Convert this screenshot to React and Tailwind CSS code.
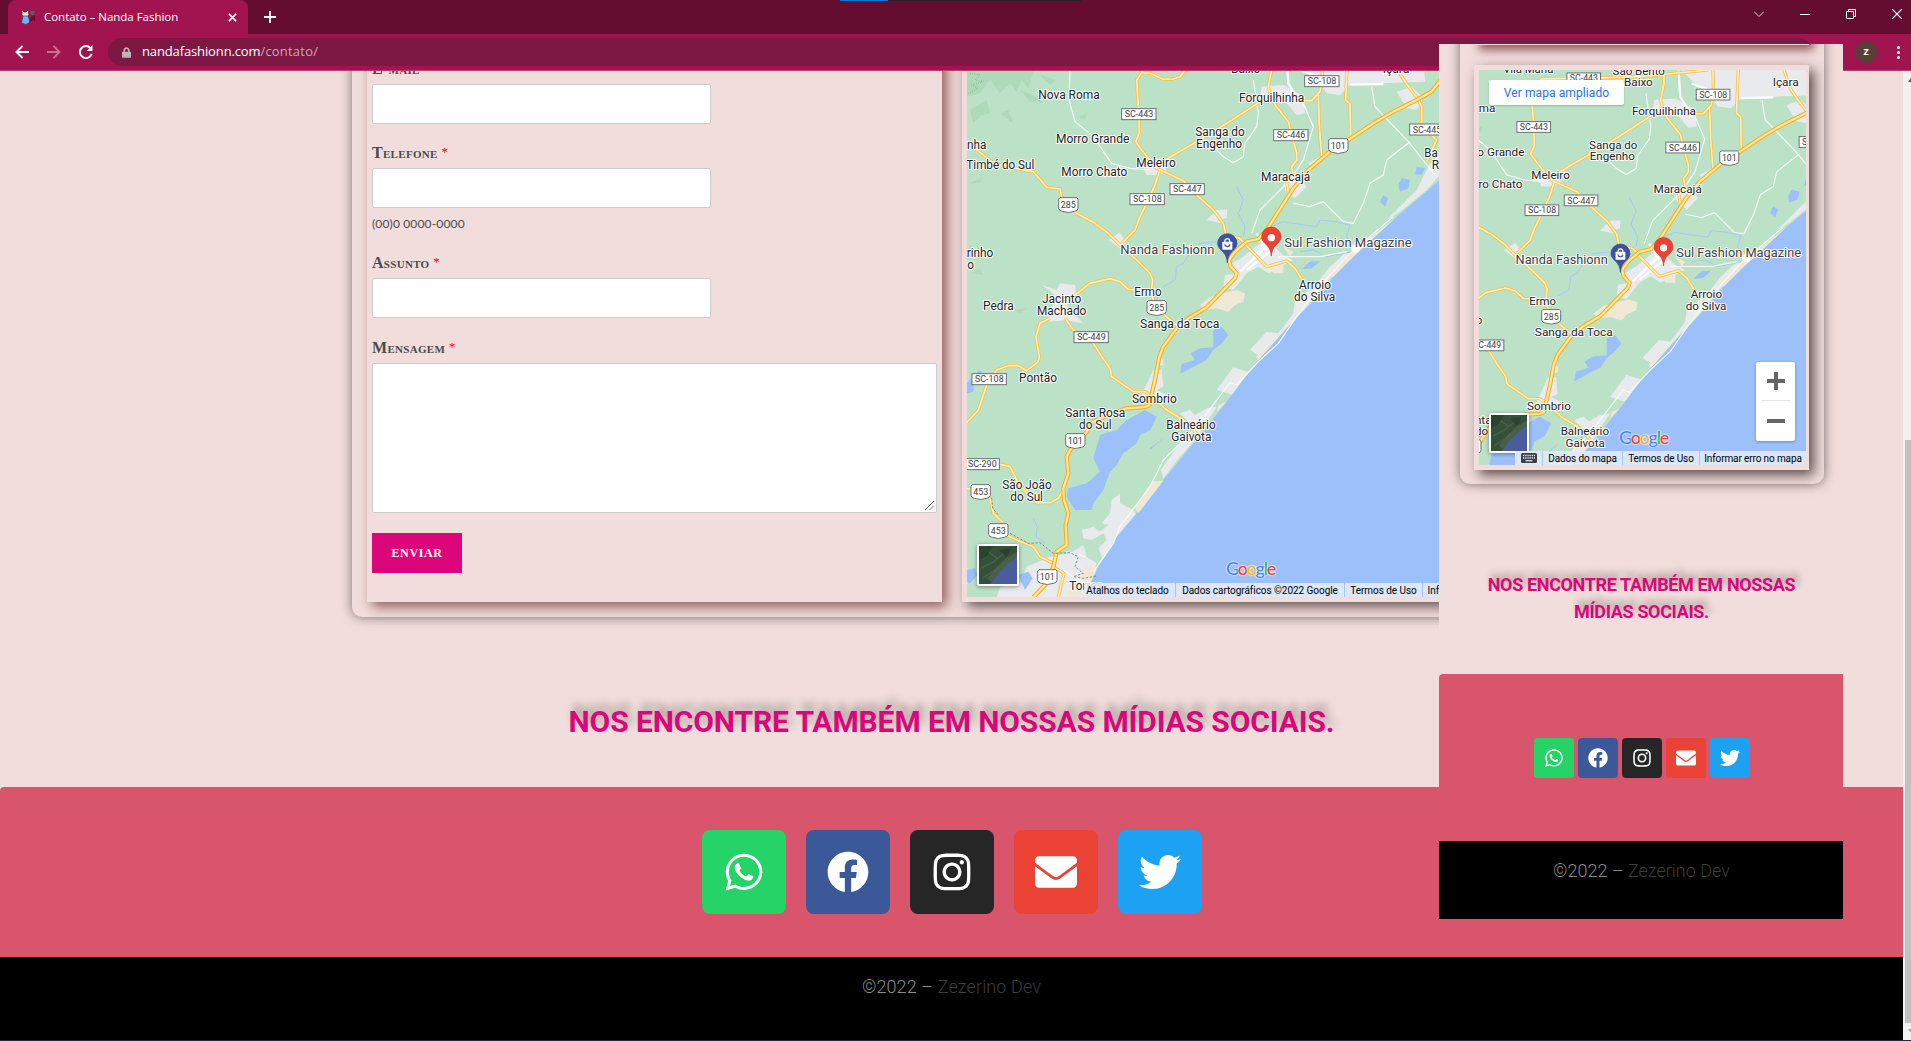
import React from "react";
import { FaWhatsapp, FaFacebook, FaInstagram, FaEnvelope, FaTwitter, FaLock } from "react-icons/fa";

const MOTORWAY =
  "M1700 -60 L1480 50 L1445 95 L1400 120 L1330 155 L1270 190 L1195 240 L1140 275 L1075 330 L1030 385 L985 455 L950 510 L925 537 L890 545 L855 575 L837 600 L842 620 L860 640 L855 655 L770 742 L715 775 L680 805 L640 860 L628 890 L615 960 L603 1010 L598 1035 L585 1041 L530 1045 L480 1062 L430 1085 L400 1130 L360 1170 L350 1190 L355 1240 L340 1285 L342 1320 L355 1360 L347 1395 L350 1455 L320 1475 L310 1520 L290 1570 L250 1612";

const ROADS = [
  "M75 265 L125 305 L165 320 L250 335 L290 382 L330 387 L335 410 L355 440 L380 460 L435 490 L475 520 L515 560 L560 600 L600 640 L608 660 L603 700 L620 745 L655 775 L685 800",
  "M705 32 L690 50 L670 57 L640 58 L600 40 L575 38 L560 60 L563 110 L567 160 L568 220 L557 245 L575 270 L620 325",
  "M575 38 L590 15 L770 12 L900 8 L1100 -12",
  "M960 105 L900 145 L830 190 L740 245 L680 280 L650 298 L620 325 L700 362 L740 405 L790 450 L820 490 L828 525 L870 535 L890 558 L950 620 L1010 603 L1035 625 L1060 665",
  "M630 330 L615 375 L590 430 L570 470 L555 510 L515 550",
  "M965 -20 L965 30 L955 80 L960 100 L975 135 L1015 185 L1025 225 L1040 280 L1040 300 L1025 320 L1030 345 L1010 365 L1015 395",
  "M1060 122 L1085 122 L1110 95 L1117 60 L1115 -20",
  "M1105 105 L1108 200 L1115 290",
  "M1193 -20 L1187 120 L1200 132 L1202 235",
  "M1330 -20 L1352 45 L1372 75 L1405 118 L1415 140 L1415 200 L1460 240 L1430 305",
  "M375 705 L420 670 L480 656 L510 665 L535 688 L570 690",
  "M300 775 L270 790 L258 830 L268 890 L265 905 L230 932 L205 917 L175 917 L140 930 L110 975 L85 1050 L51 1087",
  "M345 775 L370 810 L400 830 L430 850 L455 890 L480 925 L485 950 L550 995 L585 995 L600 1005 L650 1050 L700 1080 L740 1120",
  "M150 1213 L180 1220 L200 1260 L230 1300 L260 1328 L300 1328 L325 1315 L340 1290",
  "M51 1285 L80 1290 L120 1315 L130 1360 L158 1387",
  "M150 1415 L200 1440 L250 1460 L270 1490 L310 1510",
  "M310 1520 L342 1540 L325 1612",
];

const WHITE_ROADS =
  "M360 33 L357 120 L375 185 L430 230 L485 310 L540 325 L600 330 M910 60 L925 160 L920 200 L885 250 L880 290 L850 308 L820 290 L790 260 M1060 130 L1090 200 L1060 300 L1020 360 L930 450 L905 520 M1030 430 L1080 440 L1120 425 L1145 450 L1180 485 L1210 490 L1240 430 L1260 370 L1300 345 L1310 300 L1380 245 M1265 80 L1275 140 L1375 245 L1455 345 M985 590 L1110 590 L1190 575 M870 635 L940 560 M1330 470 L1200 580 L1100 690 L1040 770 L985 850 L925 905 L860 975 L840 968 L740 1100 L640 1200 L600 1280 L510 1400 L490 1450 L430 1535 M340 1530 L400 1570 M350 1475 L405 1490";

const RIVERS =
  "M860 380 L880 420 L865 460 L885 500 L880 530 M960 500 L1000 485 L1040 492 L1100 500 L1110 480 L1160 485 L1200 495 L1190 530 L1205 550 M1205 575 L1130 590 L1090 570 L1050 575 M745 550 L800 545 L820 560 M730 560 L700 610 L680 620 L675 660 L640 680 M630 690 L620 720 M250 1375 L262 1400 L258 1430 L285 1450";

const URBAN = [
  "M1010 -20 L1180 -20 L1420 -20 L1425 65 L1300 70 L1290 75 L1200 75 L1170 105 L1130 100 L1100 60 L1060 30 Z",
  "M935 80 L1000 75 L1060 110 L1065 160 L1040 165 L1010 130 L930 120 Z",
  "M1340 95 L1385 80 L1420 115 L1400 150 L1370 145 Z",
  "M575 315 L625 300 L650 330 L630 345 L590 345 Z",
  "M770 480 L800 450 L832 448 L830 475 L800 480 L825 492 Z",
  "M475 540 L510 518 L530 545 L510 565 Z",
  "M1000 370 L1050 355 L1070 380 L1055 395 L1035 415 L1005 390 Z",
  "M1075 310 L1110 290 L1130 280 L1120 300 L1085 330 Z",
  "M880 590 L915 560 L950 540 L1000 585 L1030 600 L980 625 L955 640 L925 620 L890 640 L850 690 L820 680 L825 645 L860 640 L845 610 Z",
  "M275 675 L320 690 L330 670 L375 675 L378 700 L350 740 L400 790 L370 785 L350 780 L300 785 L290 760 L320 720 L310 700 Z",
  "M610 930 L635 930 L640 980 L620 990 L650 1005 L620 1025 L590 1010 L575 1005 Z",
  "M620 895 L640 895 L640 915 L615 920 Z",
  "M1475 340 L1430 390 L1350 455 L1310 480 L1400 390 L1440 310 L1475 280 Z",
  "M1140 620 L1190 575 L1210 590 L1140 655 L1070 740 L1000 815 L935 890 L900 870 L950 815 L985 820 L1030 760 L1035 725 L1100 670 Z",
  "M850 922 L893 935 L850 1005 L800 990 Z",
  "M690 1060 L720 1050 L735 1065 L770 1045 L800 1040 L735 1140 L690 1190 L640 1255 L632 1230 L690 1150 L740 1110 Z",
  "M485 1320 L510 1300 L510 1330 L550 1350 L560 1365 L510 1420 L460 1500 L445 1465 L470 1440 L460 1420 L425 1440 L400 1435 L395 1410 L430 1400 L450 1415 L475 1395 L455 1390 L480 1360 Z",
  "M300 1490 L360 1480 L400 1455 L410 1490 L440 1510 L400 1612 L140 1612 L150 1580 L210 1570 L230 1520 Z",
];

const LAKES = [
  "M585 1050 L620 1070 L600 1110 L570 1125 L560 1150 L520 1180 L500 1215 L480 1235 L460 1290 L430 1330 L425 1350 L375 1350 L350 1310 L355 1285 L410 1270 L450 1235 L430 1195 L450 1125 L500 1110 L530 1080 Z",
  "M790 810 L815 800 L835 825 L815 850 L790 870 L770 900 L740 915 L690 942 L695 912 L735 900 L722 880 L750 865 L790 862 Z",
  "M1400 320 L1425 325 L1415 345 L1395 342 Z",
  "M1355 355 L1380 360 L1375 385 L1350 395 L1345 375 Z",
  "M1300 405 L1315 415 L1305 440 L1290 425 Z",
  "M1055 628 L1080 605 L1110 603 L1085 625 Z",
  "M205 1545 L235 1535 L248 1555 L225 1590 Z",
  "M51 1530 L75 1525 L82 1545 L60 1570 L51 1565 Z",
  "M51 970 L72 945 L90 930 L100 945 L75 960 L70 995 L51 1000 Z",
  "M600 1165 L645 1130 L602 1168 Z",
];

const PLACES = [
  ["Vila Maria", 550, -2, 154],
  ["São Bento", 888, 4, 160],
  ["Baixo", 887, 38, 88],
  ["Içara", 1338, 38, 80],
  ["Nova Roma", 357, 118, 184],
  ["Forquilhinha", 965, 126, 196],
  ["Morro Grande", 428, 250, 220],
  ["Sanga do", 810, 229, 148],
  ["Engenho", 807, 265, 138],
  ["nha", 80, 267, 58],
  ["Timbé do Sul", 151, 327, 204],
  ["Morro Chato", 433, 348, 198],
  ["Meleiro", 618, 322, 118],
  ["Maracajá", 1007, 364, 148],
  ["Ba", 1443, 292, 40],
  ["R", 1456, 328, 22],
  ["rinho", 90, 591, 80],
  ["o", 62, 627, 20],
  ["Ermo", 594, 709, 82],
  ["Arroio", 1095, 687, 96],
  ["do Silva", 1094, 723, 124],
  ["Jacinto", 335, 730, 118],
  ["Machado", 335, 766, 148],
  ["Pedra", 145, 750, 92],
  ["Sanga da Toca", 689, 804, 238],
  ["Pontão", 264, 967, 114],
  ["Sombrio", 613, 1029, 134],
  ["Santa Rosa", 436, 1071, 180],
  ["do Sul", 436, 1107, 98],
  ["Balneário", 723, 1107, 148],
  ["Gaivota", 724, 1143, 120],
  ["São João", 231, 1287, 148],
  ["do Sul", 230, 1323, 98],
  ["Torres", 408, 1590, 100],
];

const STATE_SIGNS = [
  ["SC-443", 720, 13],
  ["SC-108", 1116, 63],
  ["SC-443", 567, 162],
  ["SC-446", 1023, 225],
  ["SC-445", 1431, 208],
  ["SC-447", 712, 387],
  ["SC-108", 592, 417],
  ["SC-449", 424, 831],
  ["SC-108", 118, 957],
  ["SC-290", 97, 1212],
];

const SHIELDS = [
  ["101", 1165, 258],
  ["285", 355, 435],
  ["285", 620, 744],
  ["101", 376, 1143],
  ["453", 92, 1296],
  ["453", 145, 1413],
  ["101", 292, 1551],
];

function Pin({ x, y, fill, edge, children }) {
  return (
    <g transform={`translate(${x} ${y})`}>
      <path
        d="M0 57 C-2 36 -8 30 -18 20 C-26 12 -29 7 -29 -1 A29 29 0 0 1 29 -1 C29 7 26 12 18 20 C8 30 2 36 0 57Z"
        fill={fill}
        stroke={edge}
        strokeWidth="2"
      />
      {children}
    </g>
  );
}

function CoastMap({ viewBox, className }) {
  return (
    <svg viewBox={viewBox} preserveAspectRatio="none" className={className} fontFamily="Roboto, sans-serif">
      <rect x="0" y="-100" width="1900" height="1800" fill="#bbe2c6" />
      <g fill="#a9d8b6" opacity=".7">
        <path d="M51 33 L250 33 L235 85 L215 60 L200 95 L180 70 L150 100 L120 60 L90 100 L51 110 Z" />
        <path d="M60 150 L110 120 L120 160 L95 165 L70 190 Z M150 160 L175 150 L190 190 Z M210 90 L260 110 L280 130 L240 125 Z" />
        <path d="M270 45 L320 60 L300 75 Z M385 170 L410 160 L405 180 Z M60 370 L100 350 L90 370 Z M60 640 L90 625 L100 645 Z M190 750 L230 745 L210 760 Z" />
      </g>
      <path d="M60 40 L90 45 L75 60 L100 65 L65 75 L85 85 L55 100" fill="none" stroke="#5f7e69" strokeWidth="2" strokeDasharray="2 5" />
      <g fill="#e8eaed">
        {URBAN.map((d) => (
          <path key={d} d={d} />
        ))}
      </g>
      <path
        d="M750 735 L780 710 L820 700 L860 690 L885 700 L880 725 L855 735 L835 755 L800 745 L765 750 Z M960 625 L1000 615 L1000 640 L970 640 Z M1000 560 L1030 575 L1020 590 Z"
        fill="#f0e8d6"
      />
      <g fill="#9cc0f9">
        {LAKES.map((d) => (
          <path key={d} d={d} />
        ))}
      </g>
      <path d={RIVERS} fill="none" stroke="#a6c8f6" strokeWidth="3" strokeLinejoin="round" />
      <path
        d="M1900 -40 L1700 130 L1467 362 L1340 470 L1265 535 L1200 600 L1150 650 L1075 738 L1003 812 L925 900 L830 1025 L730 1150 L640 1260 L560 1360 L500 1430 L440 1530 L400 1612 L1900 1612 Z"
        fill="#9cc0f9"
      />
      <path d="M1340 470 L1200 600 L1150 650 L1130 650 L1205 575 Z M1005 810 L925 900 L918 890 Z M830 1025 L800 1055 L805 1035 Z M640 1262 L565 1360 L555 1345 L605 1265 Z M440 1530 L400 1612 L345 1612 L415 1510 Z" fill="#f0e8d6" />
      <path d={WHITE_ROADS} fill="none" stroke="#f6faf8" strokeWidth="3.5" strokeLinejoin="round" />
      <path d="M870 635 L950 560 M890 630 L960 575 M920 520 L950 570 M1010 -10 L1015 70 L1045 120 M1200 74 L1300 72 M1050 30 L1120 55" fill="none" stroke="#fff" strokeWidth="7" />
      <circle cx="1217" cy="565" r="13" fill="#fff" />
      <g fill="none" strokeLinejoin="round">
        {ROADS.map((d) => (
          <path key={d} d={d} stroke="#f4c04f" strokeWidth="10" />
        ))}
        {ROADS.map((d) => (
          <path key={d} d={d} stroke="#ffeeb5" strokeWidth="5" />
        ))}
        <path d={MOTORWAY} stroke="#f6ae1f" strokeWidth="13" />
        <path d={MOTORWAY} stroke="#ffe89c" strokeWidth="6.5" />
      </g>
      <path
        d="M125 1315 L128 1345 L145 1365 M180 1420 L235 1450 L270 1448 L310 1480 L360 1478 L385 1490 L375 1520 L400 1540 L370 1550 L400 1555 L440 1548"
        fill="none"
        stroke="#7d8a94"
        strokeWidth="3"
        strokeDasharray="7 5"
      />
      <g fontSize="36" fill="#202124" stroke="#fff" strokeWidth="6" strokeLinejoin="round" paintOrder="stroke" textAnchor="middle">
        {PLACES.map(([name, x, y, w]) => (
          <text key={name + y} x={x} y={y} textLength={w} lengthAdjust="spacingAndGlyphs">
            {name}
          </text>
        ))}
      </g>
      <g fontSize="26" fill="#3c4043" textAnchor="middle">
        {STATE_SIGNS.map(([name, x, y]) => (
          <g key={name + y}>
            <rect x={x - 52} y={y - 16} width="103" height="33" fill="#fff" stroke="#6b6e71" strokeWidth="3" />
            <text x={x} y={y + 10} textLength="86" lengthAdjust="spacingAndGlyphs">
              {name}
            </text>
          </g>
        ))}
        {SHIELDS.map(([name, x, y]) => (
          <g key={name + y}>
            <path
              d={`M${x - 25} ${y - 22} H${x + 25} Q${x + 31} ${y - 20} ${x + 29} ${y - 10} V${y + 10} Q${x + 28} ${y + 18} ${x + 18} ${y + 19} Q${x} ${y + 26} ${x - 18} ${y + 19} Q${x - 28} ${y + 18} ${x - 29} ${y + 10} V${y - 10} Q${x - 31} ${y - 20} ${x - 25} ${y - 22}Z`}
              fill="#fff"
              stroke="#6b6e71"
              strokeWidth="3"
            />
            <text x={x} y={y + 10} textLength="45" lengthAdjust="spacingAndGlyphs">
              {name}
            </text>
          </g>
        ))}
      </g>
      <g fontSize="39" fill="#3c4043" stroke="#fff" strokeWidth="6" strokeLinejoin="round" paintOrder="stroke">
        <text x="511" y="581" textLength="282" lengthAdjust="spacingAndGlyphs">Nanda Fashionn</text>
        <text x="1003" y="560" textLength="382" lengthAdjust="spacingAndGlyphs">Sul Fashion Magazine</text>
      </g>
      <Pin x={832} y={551} fill="#3f51a5" edge="#33428c">
        <rect x="-15" y="-6" width="30" height="24" rx="2" fill="#fff" />
        <path d="M-7 -4 V-8 A7 7 0 0 1 7 -8 V-4" fill="none" stroke="#fff" strokeWidth="4" />
        <path d="M-7 2 A7 7 0 0 0 7 2" fill="none" stroke="#3f51a5" strokeWidth="3.5" />
      </Pin>
      <Pin x={964} y={531} fill="#ea4335" edge="#c5372b">
        <circle cx="0" cy="2" r="11" fill="#fff" />
      </Pin>
    </svg>
  );
}

function Satellite({ className }) {
  return (
    <svg viewBox="0 0 38 38" className={className}>
      <rect width="38" height="38" fill="#35503a" />
      <path d="M0 0 H14 L8 10 L0 14Z M20 4 L32 2 L28 12Z" fill="#2a4230" />
      <path d="M2 22 L14 16 L24 8 M4 32 L16 24 L30 10 M10 6 L18 12" stroke="#4b5f45" strokeWidth="1.5" fill="none" />
      <path d="M8 32 L20 20 L34 8 L38 6 L38 12 L12 36Z" fill="#6b765c" opacity=".4" />
      <path d="M11 38 L20 27 L30 17 L38 11 V38Z" fill="#4a5c9b" />
    </svg>
  );
}

function GoogleMark() {
  return (
    <span className="font-['Lato',sans-serif] text-[18px] leading-[20px] font-medium tracking-[-1.3px] [text-shadow:0_0_2px_#fff,0_0_2px_#fff]">
      <span className="text-[#4285f4]">G</span>
      <span className="text-[#ea4335]">o</span>
      <span className="text-[#fbbc04]">o</span>
      <span className="text-[#4285f4]">g</span>
      <span className="text-[#34a853]">l</span>
      <span className="text-[#ea4335]">e</span>
    </span>
  );
}

function Keyboard() {
  return (
    <svg viewBox="0 0 16 10" className="h-[10px] w-4">
      <rect width="16" height="10" rx="1.5" fill="#3c4043" />
      <path d="M2 2.5H14M2 5H14" stroke="#e8eef8" strokeWidth="1.3" strokeDasharray="1.3 0.9" />
      <path d="M4.5 7.8H11.5" stroke="#e8eef8" strokeWidth="1.2" />
    </svg>
  );
}

function FieldLabel({ children }) {
  return (
    <div className="flex h-11 items-end pb-[5px] font-['Liberation_Serif',serif] text-[16px] leading-5 font-bold text-[#4a4a4a]">
      <span className="tracking-[0.3px] [font-variant:small-caps]">{children}</span>
      <span className="ml-[3px] text-[13px] leading-[22px] font-normal text-[#ff0000] italic">*</span>
    </div>
  );
}

function TextInput() {
  return <input className="block h-10 w-[339px] rounded-[2px] border border-[#ccc] bg-white" />;
}

const SOCIAL = [
  [FaWhatsapp, "bg-[#25d366]"],
  [FaFacebook, "bg-[#3b5998]"],
  [FaInstagram, "bg-[#262626]"],
  [FaEnvelope, "bg-[#ea4335]"],
  [FaTwitter, "bg-[#1da1f2]"],
];

function BrowserChrome() {
  return (
    <header className="relative z-10 h-[71px] shrink-0 border-b border-[#b93f73] bg-[#a1144f] font-['Open_Sans','Noto_Sans',sans-serif] text-white">
      <div className="flex h-[34px] bg-[#650d30]">
        <div className="ml-2 flex w-60 items-center rounded-t-[8px] bg-[#a1144f] pr-[11px] pl-[13px]">
          <svg viewBox="0 0 16 16" className="size-4">
            <path d="M1 1L3 3H5L7 1L8 6L6 8H3L1 6Z" fill="#f4dcc4" stroke="#3a1a2c" strokeWidth=".6" />
            <path d="M2 7H7L9 13L5 15.5L.5 14Z" fill="#74b3f0" stroke="#2b3a66" strokeWidth=".6" />
            <path d="M9 2H14L13 6H10Z" fill="#5c5a72" />
            <path d="M10 8L14 6V13L12 11L8 14Z" fill="#6a1030" />
          </svg>
          <span className="ml-[7px] text-[11.5px] tracking-[-0.02px] whitespace-nowrap">Contato – Nanda Fashion</span>
          <svg viewBox="0 0 10 10" className="ml-auto size-[9px]">
            <path d="M1 1L9 9M9 1L1 9" stroke="#fff" strokeWidth="1.8" />
          </svg>
        </div>
        <svg viewBox="0 0 12 12" className="mt-[11px] ml-4 size-3">
          <path d="M6 0V12M0 6H12" stroke="#fff" strokeWidth="1.8" />
        </svg>
        <div className="mt-[7px] ml-auto flex h-3.5 items-center gap-9 pr-[9px]">
          <svg viewBox="0 0 10 6" className="h-1.5 w-2.5"><path d="M0 .5L5 5.5L10 .5" fill="none" stroke="#e7cdd7" /></svg>
          <span className="h-px w-2.5 bg-white" />
          <svg viewBox="0 0 10 10" className="size-2.5"><path d="M.5 2.5H7.5V9.5H.5Z M2.5 2.5V.5H9.5V7.5H7.5" fill="none" stroke="#fff" /></svg>
          <svg viewBox="0 0 10 10" className="size-2.5"><path d="M0 0L10 10M10 0L0 10" stroke="#fff" strokeWidth="1.2" /></svg>
        </div>
      </div>
      <div className="flex h-9 items-center pl-[15px]">
        <svg viewBox="0 0 14 14" className="size-3.5"><path d="M14 7H1.5M7.5 1L1.5 7L7.5 13" fill="none" stroke="#fff" strokeWidth="1.9" /></svg>
        <svg viewBox="0 0 14 14" className="ml-[18px] size-3.5"><path d="M0 7H12.5M6.5 1L12.5 7L6.5 13" fill="none" stroke="#ca6d94" strokeWidth="1.9" /></svg>
        <svg viewBox="0 0 14 14" className="ml-[18px] size-3.5"><path d="M11.5 3.2A6 6 0 1 0 12.7 8.8" fill="none" stroke="#fff" strokeWidth="2" /><path d="M13.5 0V6H7.8Z" fill="#fff" /></svg>
        <div className="ml-[15px] flex h-7 w-[1704px] items-center rounded-full bg-[#7d1743] pl-3.5">
          <FaLock className="h-[11px] w-[9px] text-[#bdb3b8]" />
          <span className="ml-[11px] text-[13px] tracking-[-0.13px]">nandafashionn.com</span>
          <span className="text-[13px] tracking-[0.2px] text-[#cda5b7]">/contato/</span>
        </div>
        <div className="ml-[43px] flex size-[22px] items-center justify-center rounded-full bg-[#593f38] text-[9px] font-bold">Z</div>
        <div className="ml-5 flex flex-col gap-0.5">
          <i className="size-[3px] rounded-full bg-white" />
          <i className="size-[3px] rounded-full bg-white" />
          <i className="size-[3px] rounded-full bg-white" />
        </div>
      </div>
      <div className="absolute top-0 left-[840px] flex h-px w-[241px] bg-[#23201f]">
        <span className="w-12 bg-[#0078d7]" />
      </div>
    </header>
  );
}

function ContactForm() {
  return (
    <div className="w-[575px] bg-[#f1dedc] pl-[5px] shadow-[5px_5px_12px_0px_rgba(110,45,40,0.72)]">
      <FieldLabel>E-mail</FieldLabel>
      <TextInput />
      <FieldLabel>Telefone</FieldLabel>
      <TextInput />
      <p className="h-[26px] pt-2 font-['Lato',sans-serif] text-[12px] leading-4 tracking-[0.15px] text-[#4a4a4a]">(00)0 0000-0000</p>
      <FieldLabel>Assunto</FieldLabel>
      <TextInput />
      <div className="pt-px"><FieldLabel>Mensagem</FieldLabel></div>
      <div className="relative h-[150px] w-[565px] rounded-[2px] border border-[#ccc] bg-white">
        <svg viewBox="0 0 9 9" className="absolute right-0.5 bottom-0.5 size-[9px]"><path d="M0 9L9 0M4.5 9L9 4.5" stroke="#555" strokeWidth=".9" /></svg>
      </div>
      <button className="mt-5 block h-10 w-[90px] bg-[#db0679] font-['Liberation_Serif',serif] text-[12px] font-bold tracking-[0.6px] text-white">ENVIAR</button>
    </div>
  );
}

function Attribution({ children, className }) {
  return <span className={`flex h-full items-center justify-center border-l border-[#a9c6f3] whitespace-nowrap ${className}`}>{children}</span>;
}

function SitePage() {
  return (
    <main className="h-[970px] w-[1903px] shrink-0 overflow-hidden bg-[#f1dedc]">
      <section className="-mt-[46px] ml-[352px] flex h-[592px] w-[1199px] gap-5 rounded-[10px] p-[15px] shadow-[0_0_12px_0_rgba(0,0,0,0.5)]">
        <ContactForm />
        <div className="relative w-[574px] p-[5px] pt-[31px] shadow-[5px_5px_12px_0px_rgba(60,40,40,0.75)]">
          <CoastMap viewBox="51 33 1692 1578" className="block h-[526px] w-[564px]" />
          <div className="absolute bottom-[16px] left-[15px] size-[42px] rounded-[2px] border-2 border-white shadow-[0_1px_4px_rgba(0,0,0,0.4)]">
            <Satellite className="size-full" />
          </div>
          <div className="absolute bottom-[21px] left-[264px]"><GoogleMark /></div>
          <div className="absolute right-[5px] bottom-[5px] flex h-[14px] w-[447px] bg-[#e3ebf7]/90 font-['Roboto',sans-serif] text-[10px] tracking-[-0.05px] text-black">
            <span className="flex w-[91px] items-center justify-center pr-1">Atalhos do teclado</span>
            <Attribution className="w-[169px]">Dados cartográficos ©2022 Google</Attribution>
            <Attribution className="w-[78px]">Termos de Uso</Attribution>
            <Attribution className="w-[109px]">Informar erro no mapa</Attribution>
          </div>
        </div>
      </section>
      <h2 className="flex h-[170px] items-end justify-center pb-[45px] font-['Roboto',sans-serif] text-[30px] leading-10 font-bold tracking-[-0.1px] text-[#db0679] [text-shadow:4px_-7px_8px_rgba(0,0,0,0.3)]">
        NOS ENCONTRE TAMBÉM EM NOSSAS MÍDIAS SOCIAIS.
      </h2>
      <section className="flex h-[170px] items-center justify-center gap-5 rounded-tl-[4px] bg-[#d9556b]">
        {SOCIAL.map(([Icon, color]) => (
          <span key={color} className={`flex size-[84px] items-center justify-center rounded-[8px] ${color}`}>
            <Icon className="size-[42px] text-white" />
          </span>
        ))}
      </section>
      <footer className="h-[84px] bg-black pt-[18px] text-center font-['Roboto',sans-serif] text-[18px] leading-6 font-light tracking-[0.12px] text-[#8b8b8b]">
        ©2022 – <span className="text-[#3c3c3c]">Zezerino Dev</span>
      </footer>
    </main>
  );
}

function MobilePreview() {
  return (
    <aside className="absolute top-[44px] left-[1439px] z-20 h-[875px] w-[404px] overflow-hidden bg-[#f1dedc]">
      <section className="-mt-5 ml-[21px] h-[460px] w-[364px] rounded-[10px] px-3.5 shadow-[0_0_12px_0_rgba(0,0,0,0.5)]">
        <div className="h-[21px] w-[335px] bg-[#f1dedc] shadow-[5px_5px_10px_0px_rgba(110,45,40,0.75)]" />
        <div className="relative mt-5 h-[405px] w-[335px] bg-[#f1dedc] pt-[5px] pl-[5px] shadow-[5px_5px_12px_0px_rgba(40,25,25,0.75)]">
          <CoastMap viewBox="399 -12 1001 1210" className="block h-[395px] w-[327px]" />
          <div className="absolute top-[15px] left-[15px] flex h-[25px] w-[135px] items-center justify-center rounded-[2px] bg-white font-['Roboto',sans-serif] text-[12px] tracking-[0.1px] text-[#1a73e8] shadow-[0_1px_2px_rgba(0,0,0,0.2)]">
            Ver mapa ampliado
          </div>
          <div className="absolute top-[348px] left-[15px] size-10 rounded-[2px] border-2 border-white shadow-[0_1px_4px_rgba(0,0,0,0.4)]">
            <Satellite className="size-full" />
          </div>
          <div className="absolute top-[361px] left-[145px]"><GoogleMark /></div>
          <div className="absolute top-[297px] left-[282px] flex h-[79px] w-[39px] flex-col items-center rounded-[2px] bg-white shadow-[0_1px_3px_rgba(0,0,0,0.3)]">
            <svg viewBox="0 0 18 18" className="mt-[10px] size-[18px]"><path d="M9 0V18M0 9H18" stroke="#666" strokeWidth="4" /></svg>
            <span className="mt-[10px] h-px w-[30px] bg-[#e6e6e6]" />
            <span className="mt-[18px] h-1 w-[18px] bg-[#666]" />
          </div>
          <div className="absolute top-[386px] left-[41px] flex h-[14px] w-[291px] bg-[#e2ebf6]/90 font-['Roboto',sans-serif] text-[10px] tracking-[-0.12px] text-black">
            <span className="flex w-[27px] items-center justify-center"><Keyboard /></span>
            <Attribution className="w-[80px]">Dados do mapa</Attribution>
            <Attribution className="w-[77px]">Termos de Uso</Attribution>
            <Attribution className="w-[107px]">Informar erro no mapa</Attribution>
          </div>
        </div>
      </section>
      <h2 className="h-[190px] pt-[87px] pl-px text-center font-['Roboto',sans-serif] text-[18px] leading-[27px] font-bold tracking-[-0.35px] text-[#db0679] [text-shadow:4px_-5px_7px_rgba(0,0,0,0.32)]">
        NOS ENCONTRE TAMBÉM EM NOSSAS
        <br />
        MÍDIAS SOCIAIS.
      </h2>
      <section className="flex h-[167px] justify-center gap-[4.5px] rounded-tl-[4px] bg-[#d9556b] pt-[64px] pl-0.5">
        {SOCIAL.map(([Icon, color]) => (
          <span key={color} className={`flex h-10 w-[39.5px] items-center justify-center rounded-[4px] ${color}`}>
            <Icon className="size-5 text-white" />
          </span>
        ))}
      </section>
      <footer className="h-[78px] bg-black pt-[18px] pl-px text-center font-['Roboto',sans-serif] text-[18px] leading-6 font-light text-[#8b8b8b]">
        ©2022 – <span className="text-[#3c3c3c]">Zezerino Dev</span>
      </footer>
    </aside>
  );
}

export default function App() {
  return (
    <div className="relative flex h-[1041px] w-[1911px] flex-col overflow-hidden bg-black">
      <BrowserChrome />
      <div className="flex h-[970px]">
        <SitePage />
        <div className="flex h-[970px] w-2 flex-col items-end bg-[#f1f1f1]">
          <svg viewBox="0 0 3 4" className="mt-[7px] h-1 w-[3px]"><path d="M3 0V4H0Z" fill="#505050" /></svg>
          <div className="mt-[358px] h-[583px] w-1.5 bg-[#c1c1c1]" />
          <svg viewBox="0 0 3 4" className="mt-[6px] h-1 w-[3px]"><path d="M3 4V0H0Z" fill="#a3a3a3" /></svg>
        </div>
      </div>
      <MobilePreview />
      <div className="absolute bottom-0 left-0 h-px w-full bg-[#1b2b40]" />
    </div>
  );
}
